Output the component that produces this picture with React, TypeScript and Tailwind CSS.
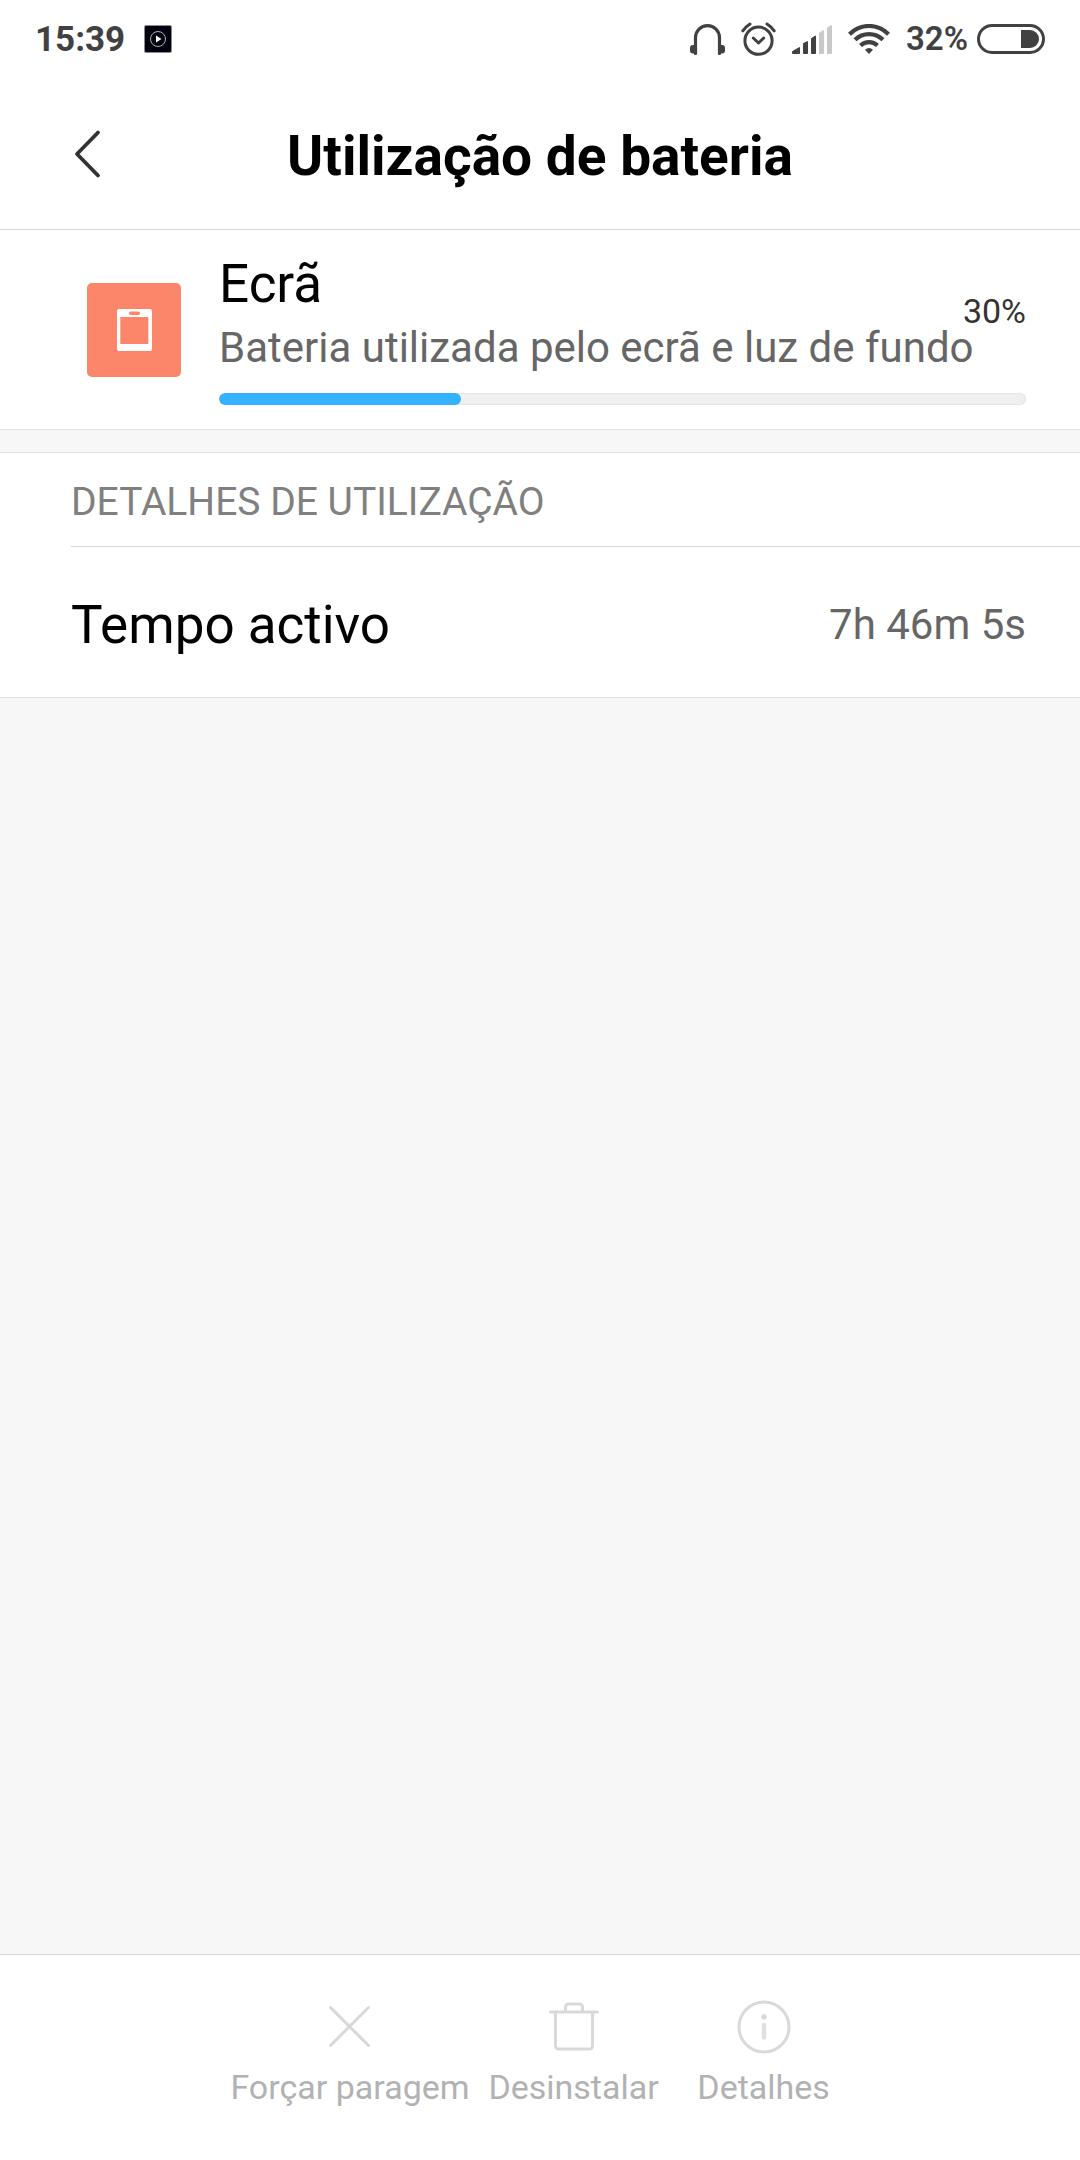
import type { ReactNode } from "react";

type Action = {
  label: string;
  icon: ReactNode;
};

const usage = { name: "Ecrã", description: "Bateria utilizada pelo ecrã e luz de fundo", percent: 30 };

const details = [{ label: "Tempo activo", value: "7h 46m 5s" }];

const actions: Action[] = [
  {
    label: "Forçar paragem",
    icon: (
      <svg width="56" height="56" viewBox="0 0 56 56" fill="none" stroke="#d9d9d9" strokeWidth="3" strokeLinecap="round">
        <path d="M8.500 8.500l38 38M46.500 8.500l-38 38" />
      </svg>
    ),
  },
  {
    label: "Desinstalar",
    icon: (
      <svg width="56" height="56" viewBox="0 0 56 56" fill="none" stroke="#d9d9d9" strokeWidth="3" strokeLinecap="round">
        <path d="M4.500 13h47" />
        <path d="M19.500 12V8a3 3 0 0 1 3-3h11a3 3 0 0 1 3 3v4" />
        <path d="M9.500 13v34a3 3 0 0 0 3 3h31a3 3 0 0 0 3-3V13" />
      </svg>
    ),
  },
  {
    label: "Detalhes",
    icon: (
      <svg width="56" height="56" viewBox="0 0 56 56" fill="none" stroke="#d9d9d9">
        <circle cx="28" cy="28" r="25" strokeWidth="3" />
        <circle cx="28" cy="18" r="2.700" fill="#d9d9d9" stroke="none" />
        <path d="M28 26v12.500" strokeWidth="4.500" strokeLinecap="round" stroke="#e0e0e0" />
      </svg>
    ),
  },
];

function StatusBar() {
  return (
    <div className="flex h-[78px] items-center justify-between px-[35px] text-[#414141]">
      <div className="flex items-center gap-[19px]">
        <span className="pt-0.5 text-[35px] font-bold">15:39</span>
        <svg width="28" height="28" viewBox="0 0 28 28">
          <rect width="28" height="28" rx="2" fill="#8a8a94" />
          <rect x="1" y="1" width="26" height="26" rx="1" fill="#02020f" />
          <circle cx="14" cy="14" r="7.500" fill="none" stroke="#d8d8dc" strokeWidth="0.8" />
          <path d="M12 10.500v7l5.500-3.500z" fill="#fff" />
        </svg>
      </div>
      <div className="flex items-center gap-4">
        {/* Headphones */}
        <svg width="35" height="31" viewBox="0 0 35 31" fill="none">
          <path d="M5.500 29.500V13.700a12 12 0 0 1 24 0V29.500" stroke="#414141" strokeWidth="3.200" strokeLinecap="round" />
          <path d="M7 21H3a3 3 0 0 0-3 3v2.500a3 3 0 0 0 3 3h4zM28 21h4a3 3 0 0 1 3 3v2.500a3 3 0 0 1-3 3h-4z" fill="#414141" />
        </svg>
        {/* Alarm */}
        <svg width="35" height="34" viewBox="0 0 35 34" fill="none" stroke="#414141" strokeWidth="3" strokeLinecap="round" strokeLinejoin="round">
          <circle cx="17.500" cy="18.700" r="13.600" />
          <path d="M12.300 16l5.200 5 5.200-5" />
          <path d="M1.800 8.800Q5 4.500 9 2M33.200 8.800Q30 4.500 26 2" />
        </svg>
        {/* Signal */}
        <svg width="40" height="29" viewBox="0 0 40 29" fill="#414141" stroke="#414141" strokeLinejoin="round">
          <path d="M.5 26.500L7.500 22.500v6h-7zM11.500 18.500l4-2v12h-4zM19.500 13.500l4-2.500v17.500h-4z" />
          <path d="M27.500 8l4-2.500v23h-4zM35.500 2.800l4-2.300v28h-4z" fill="#c9c9c9" stroke="#c9c9c9" />
        </svg>
        {/* Wi-Fi */}
        <svg width="42" height="30" viewBox="0 0 42 30" fill="none" stroke="#414141" strokeWidth="4.200">
          <path d="M1.500 10.300a27 27 0 0 1 39 0" />
          <path d="M7 15.800a20 20 0 0 1 28 0" />
          <path d="M12.500 21.500a12.500 12.500 0 0 1 17 0" />
          <path d="M17 25.800q4-3.500 8 0l-4 4.200z" fill="#414141" stroke="none" />
        </svg>
        <div className="flex items-center gap-[9px]">
          <span className="text-[33px] font-semibold">32%</span>
          <svg width="68" height="30" viewBox="0 0 68 30" fill="none">
            <rect x="1.500" y="1.500" width="65" height="27" rx="13.500" stroke="#414141" strokeWidth="3" />
            <path d="M44 6h9a9 9 0 0 1 0 18h-9z" fill="#414141" />
          </svg>
        </div>
      </div>
    </div>
  );
}

function Header() {
  return (
    <header className="grid h-[152px] grid-cols-[1fr_auto_1fr] items-center border-b border-[#d5d5d5]">
      <button aria-label="Voltar" className="ml-[59px] flex size-14 items-center justify-center justify-self-start">
        <svg width="28" height="50" viewBox="0 0 28 50" fill="none" stroke="#333" strokeWidth="3.800" strokeLinecap="round" strokeLinejoin="round">
          <path d="M25 3.500L4 25l21 21.500" />
        </svg>
      </button>
      <h1 className="pt-1 text-[55px] leading-[72px] font-bold text-black">Utilização de bateria</h1>
    </header>
  );
}

function UsageSummary() {
  return (
    <section className="flex border-b border-[#e0e0e0] bg-white pt-5 pr-[54px] pb-6 pl-[87px]">
      <svg className="mt-[33px] mr-[38px] shrink-0" width="94" height="94" viewBox="0 0 94 94">
        <rect width="94" height="94" rx="5" fill="#fb8669" />
        <rect x="30" y="26" width="35" height="42" rx="2" fill="#fff" />
        <rect x="42" y="28.500" width="11" height="3.500" rx="1.700" fill="#fb8669" />
        <rect x="33.300" y="34" width="28" height="27" fill="#fb8669" />
      </svg>
      <div className="min-w-0 flex-1">
        <div className="flex items-center">
          <div className="min-w-0 flex-1 whitespace-nowrap">
            <h2 className="text-[53px] leading-[68px] text-black">{usage.name}</h2>
            <p className="text-[42px] leading-[60px] text-[#666]">{usage.description}</p>
          </div>
          <span className="pb-1.5 text-[34px] text-[#333]">{usage.percent}%</span>
        </div>
        <div
          role="progressbar"
          aria-label={usage.name}
          aria-valuenow={usage.percent}
          className="mt-[15px] h-3 overflow-hidden rounded-full bg-[#efefef] inset-ring inset-ring-[#e5e5e5]"
        >
          <div className="h-full rounded-full bg-[#33b2ff]" style={{ width: `${usage.percent}%` }} />
        </div>
      </div>
    </section>
  );
}

function UsageDetails() {
  return (
    <section className="mt-[22px] border-y border-[#e0e0e0] bg-white pl-[71px]">
      <h2 className="border-b border-[#d8d8d8] pt-[21px] pb-4 text-[39px] leading-[56px] text-[#808080]">
        DETALHES DE UTILIZAÇÃO
      </h2>
      <dl>
        {details.map((item) => (
          <div key={item.label} className="flex items-center justify-between pt-[46px] pr-[54px] pb-10">
            <dt className="text-[53px] leading-[64px] text-black">{item.label}</dt>
            <dd className="text-[42px] leading-[60px] text-[#666]">{item.value}</dd>
          </div>
        ))}
      </dl>
    </section>
  );
}

export default function App() {
  return (
    <div className="flex min-h-screen flex-col bg-[#f7f7f7] font-['Roboto',sans-serif]">
      <div className="bg-white">
        <StatusBar />
        <Header />
      </div>
      <main className="flex-1">
        <UsageSummary />
        <UsageDetails />
      </main>
      <footer className="flex justify-center border-t border-[#d5d5d5] bg-white pt-11 pb-[49px]">
        {actions.map((action) => (
          <button key={action.label} disabled className="flex min-w-[190px] flex-col items-center gap-2 px-[9px]">
            {action.icon}
            <span className="text-[34px] leading-[48px] text-[#b2b2b2]">{action.label}</span>
          </button>
        ))}
      </footer>
    </div>
  );
}
